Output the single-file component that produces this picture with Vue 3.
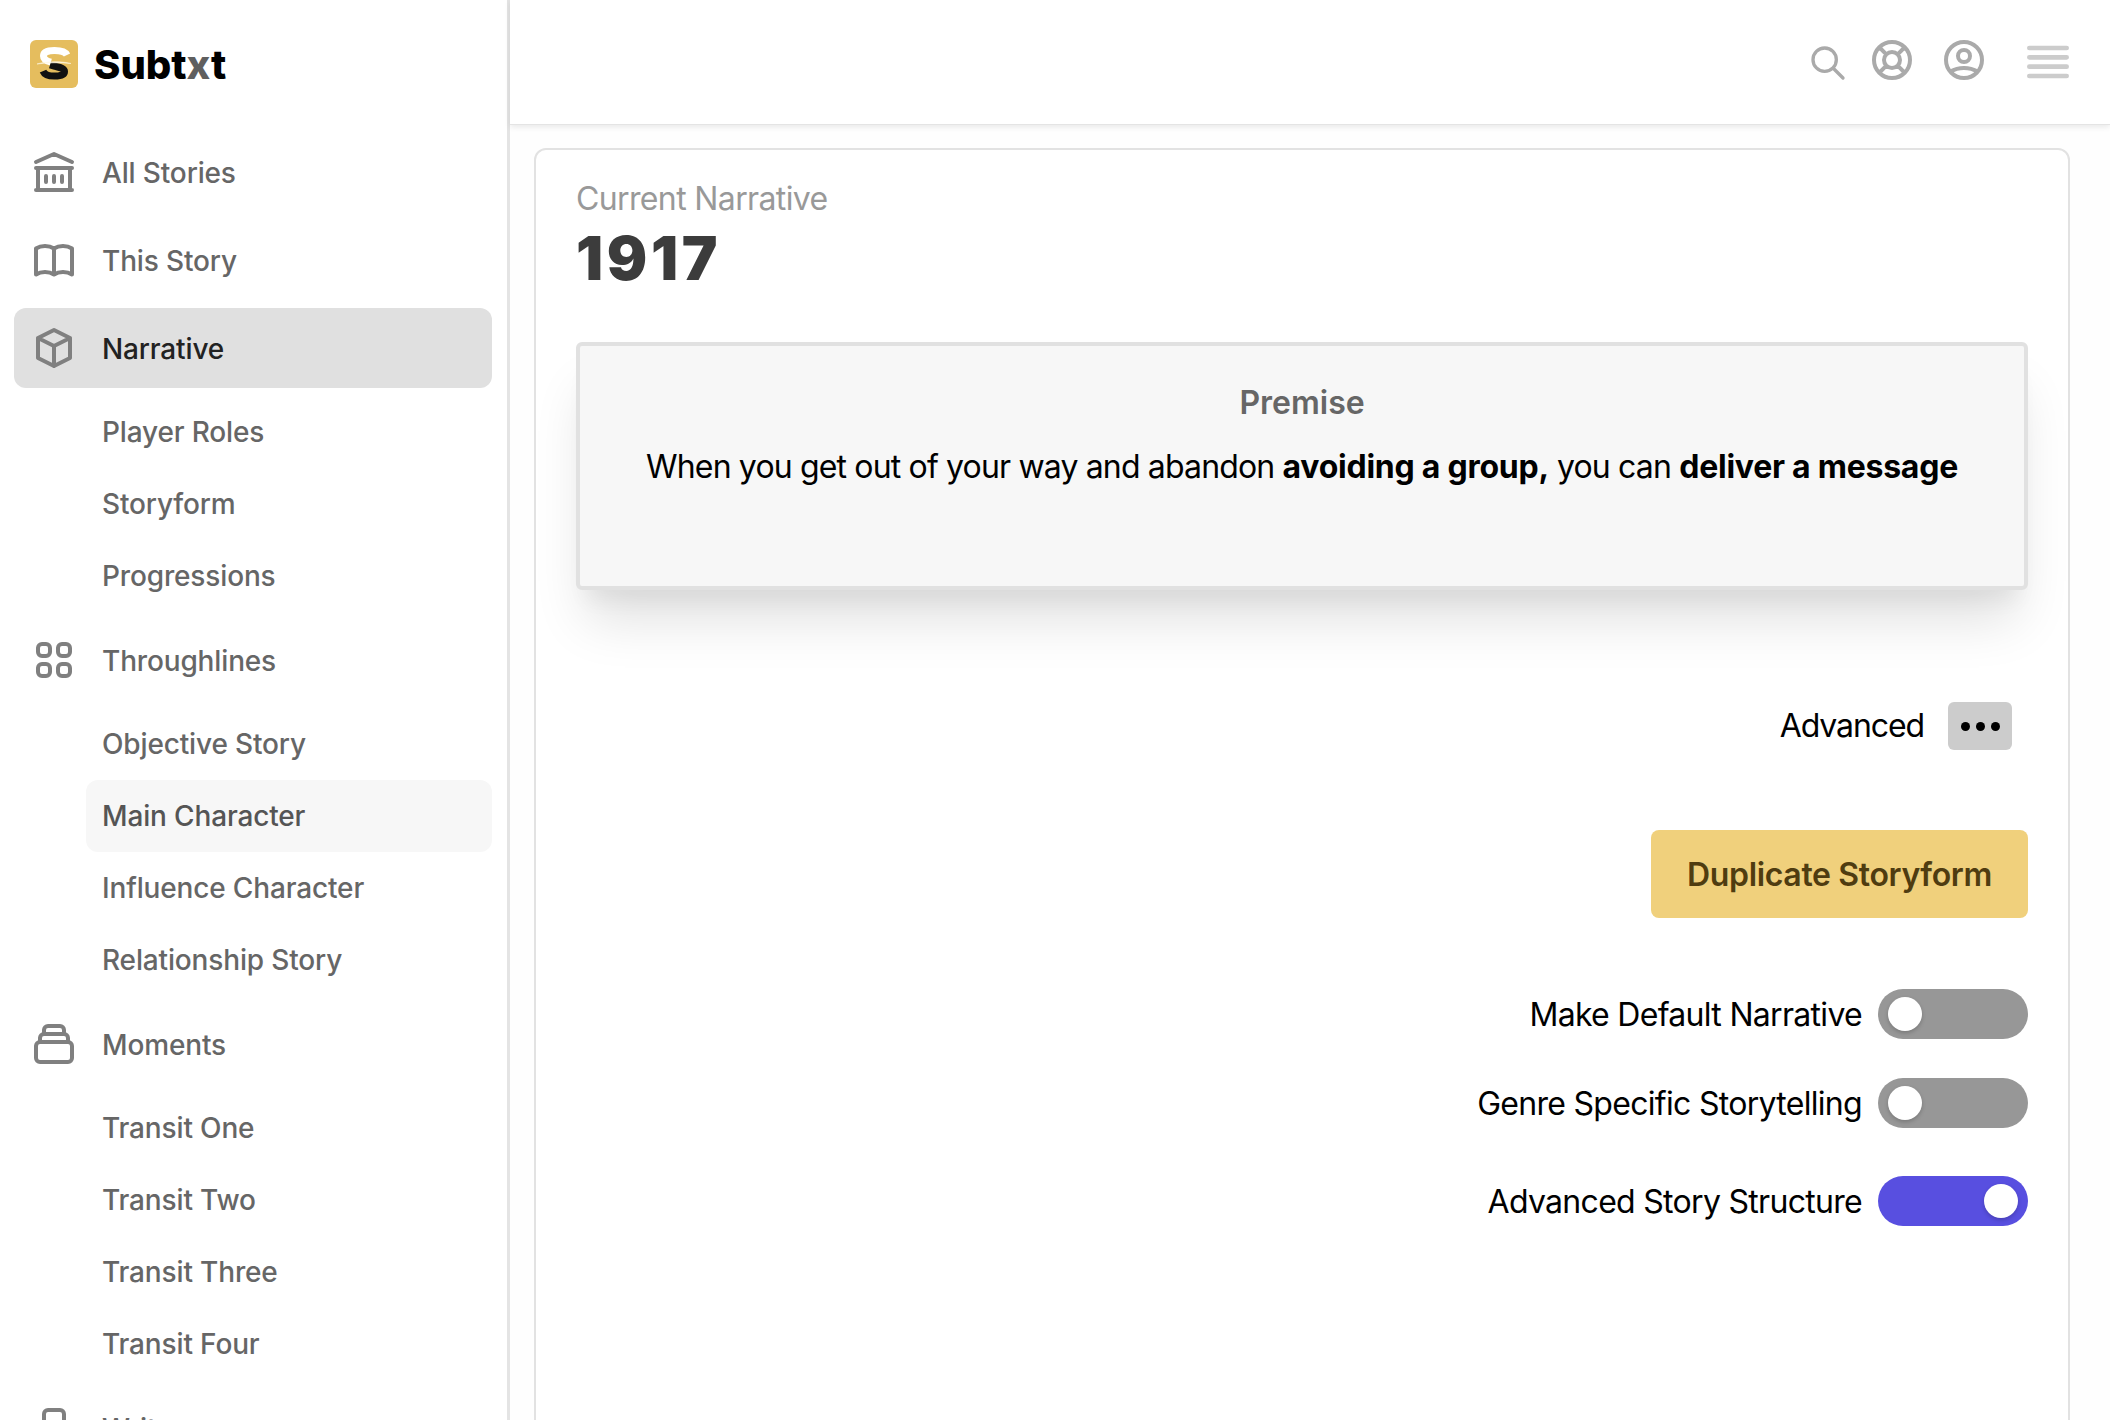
<script setup>
const icons = {
  library: 'M8 14v3m4-3v3m4-3v3M3 21h18M3 10h18M3 7l9-4 9 4M4 10h16v11H4V10z',
  book: 'M12 6.253v13m0-13C10.832 5.477 9.246 5 7.5 5S4.168 5.477 3 6.253v13C4.168 18.477 5.754 18 7.5 18s3.332.477 4.5 1.253m0-13C13.168 5.477 14.754 5 16.5 5c1.747 0 3.332.477 4.5 1.253v13C19.832 18.477 18.247 18 16.5 18c-1.746 0-3.332.477-4.5 1.253',
  cube: 'M20 7l-8-4-8 4m16 0l-8 4m8-4v10l-8 4m0-10L4 7m8 4v10M4 7v10l8 4',
  grid: 'M4 6a2 2 0 012-2h2a2 2 0 012 2v2a2 2 0 01-2 2H6a2 2 0 01-2-2V6zM14 6a2 2 0 012-2h2a2 2 0 012 2v2a2 2 0 01-2 2h-2a2 2 0 01-2-2V6zM4 16a2 2 0 012-2h2a2 2 0 012 2v2a2 2 0 01-2 2H6a2 2 0 01-2-2v-2zM14 16a2 2 0 012-2h2a2 2 0 012 2v2a2 2 0 01-2 2h-2a2 2 0 01-2-2v-2z',
  stack: 'M19 11H5m14 0a2 2 0 012 2v6a2 2 0 01-2 2H5a2 2 0 01-2-2v-6a2 2 0 012-2m14 0V9a2 2 0 00-2-2M5 11V9a2 2 0 012-2m0 0V5a2 2 0 012-2h6a2 2 0 012 2v2M7 7h10',
  doc: 'M9 21h6a2 2 0 002-2V5a2 2 0 00-2-2H9a2 2 0 00-2 2v14a2 2 0 002 2z',
}
const nav = [
  { label: 'All Stories', icon: 'library' },
  { label: 'This Story', icon: 'book' },
  { label: 'Narrative', icon: 'cube', active: true, subs: [{ label: 'Player Roles' }, { label: 'Storyform' }, { label: 'Progressions' }] },
  { label: 'Throughlines', icon: 'grid', subs: [{ label: 'Objective Story' }, { label: 'Main Character', current: true }, { label: 'Influence Character' }, { label: 'Relationship Story' }] },
  { label: 'Moments', icon: 'stack', subs: [{ label: 'Transit One' }, { label: 'Transit Two' }, { label: 'Transit Three' }, { label: 'Transit Four' }] },
  { label: 'Write', icon: 'doc' },
]
const toggles = [
  { label: 'Make Default Narrative', on: false, cls: 'first' },
  { label: 'Genre Specific Storytelling', on: false, cls: 'second' },
  { label: 'Advanced Story Structure', on: true, cls: 'third' },
]
</script>

<template>
  <div class="app">
    <aside class="sidebar">
      <div class="brand">
        <svg class="logo" viewBox="0 0 48 48" width="48" height="48">
          <rect width="48" height="48" rx="6" fill="#e5bd5e" />
          <path d="M37 15C35 11 30 10.500 24.500 10.500 17.500 10.500 13.500 12.500 13.500 16c0 3 2.500 5 7.500 6.200" fill="none" stroke="#fff" stroke-width="7" />
          <path d="M20 25c2 .6 4 1 6 1.500 5 1.200 8.500 2.200 8.500 5 0 3-4 4.600-10 4.600-6 0-10-1.400-11.500-5" fill="none" stroke="#111" stroke-width="7" />
          <path d="M7 24C17 21 31 21 41 23.500 31 22.500 17 22.500 7 24z" fill="#fff8e6" stroke="#fff8e6" stroke-width=".5" />
        </svg>
        <span class="brand-name">Subt<span class="brand-x">x</span>t</span>
      </div>
      <nav class="nav">
        <template v-for="item in nav" :key="item.label">
          <div class="nav-row" :class="{ active: item.active }">
            <svg class="nav-icon" viewBox="0 0 24 24" width="48" height="48">
              <path :d="icons[item.icon]" />
            </svg>
            <span class="nav-label">{{ item.label }}</span>
          </div>
          <div v-if="item.subs" class="subs">
            <div v-for="sub in item.subs" :key="sub.label" class="sub-row" :class="{ current: sub.current }">{{ sub.label }}</div>
          </div>
        </template>
      </nav>
    </aside>

    <div class="column">
      <header class="topbar">
        <svg class="top-icon search" viewBox="0 0 24 24" width="40" height="40"><path d="M21 21l-6-6m2-5a7 7 0 11-14 0 7 7 0 0114 0z" /></svg>
        <svg class="top-icon help" viewBox="0 0 24 24" width="48" height="48"><path d="M18.364 5.636l-3.536 3.536m0 5.656l3.536 3.536M9.172 9.172L5.636 5.636m3.536 9.192l-3.536 3.536M21 12a9 9 0 11-18 0 9 9 0 0118 0zm-5 0a4 4 0 11-8 0 4 4 0 018 0z" /></svg>
        <svg class="top-icon user" viewBox="0 0 24 24" width="48" height="48"><path d="M5.121 17.804A13.937 13.937 0 0112 16c2.500 0 4.847.655 6.879 1.804M15 10a3 3 0 11-6 0 3 3 0 016 0zm6 2a9 9 0 11-18 0 9 9 0 0118 0z" /></svg>
        <svg class="top-icon menu" viewBox="0 0 24 24" width="56" height="56"><path d="M4 6h16M4 10h16M4 14h16M4 18h16" /></svg>
      </header>

      <main class="main">
        <section class="card">
          <div class="eyebrow">Current Narrative</div>
          <h1 class="title">1917</h1>

          <div class="premise">
            <h2 class="premise-title">Premise</h2>
            <p class="premise-text">When you get out of your way and abandon <b>avoiding a group,</b> you can <b>deliver a message</b></p>
          </div>

          <div class="advanced">
            <span class="advanced-label">Advanced</span>
            <button class="dots" type="button" aria-label="Advanced">
              <i></i><i></i><i></i>
            </button>
          </div>

          <div class="actions">
            <button class="duplicate" type="button">Duplicate Storyform</button>
          </div>

          <div v-for="t in toggles" :key="t.label" class="toggle-row" :class="t.cls">
            <span>{{ t.label }}</span>
            <span class="toggle" :class="{ on: t.on }"><span class="knob"></span></span>
          </div>
        </section>
      </main>
    </div>
  </div>
</template>

<style scoped>
.app {
  display: flex;
  width: 2110px;
  height: 1420px;
  overflow: hidden;
  font-family: Inter, "Noto Sans", sans-serif;
  background: #fff;
  color: #000;
}
.sidebar {
  flex: none;
  width: 510px;
  height: 1420px;
  box-sizing: border-box;
  border-right: 3px solid #e4e4e4;
  overflow: hidden;
}
.brand {
  display: flex;
  align-items: center;
  gap: 16px;
  height: 48px;
  padding: 40px 0 0 30px;
}
.logo { flex: none; }
.brand-name {
  font-size: 40px;
  font-weight: 800;
  color: #000;
}
.brand-x { color: #5f5f5f; }
.nav {
  display: flex;
  flex-direction: column;
  padding: 44px 15px 0 14px;
}
.nav-row {
  display: flex;
  align-items: center;
  gap: 24px;
  flex: none;
  height: 80px;
  margin-bottom: 8px;
  padding-left: 16px;
  border-radius: 12px;
  font-size: 28px;
  font-weight: 500;
  letter-spacing: -0.15px;
  color: #666;
}
.nav-label { padding-top: 2px; }
.nav-row.active {
  background: #e0e0e0;
  color: #222;
}
.nav-icon {
  flex: none;
  fill: none;
  stroke: #808080;
  stroke-width: 2;
  stroke-linecap: round;
  stroke-linejoin: round;
}
.subs {
  display: flex;
  flex-direction: column;
  margin-bottom: 8px;
}
.sub-row {
  height: 72px;
  line-height: 73px;
  margin-left: 72px;
  padding-left: 16px;
  border-radius: 12px;
  font-size: 28px;
  font-weight: 500;
  letter-spacing: -0.15px;
  color: #666;
}
.sub-row.current {
  background: #f7f7f7;
  color: #555;
}
.column {
  flex: 1;
  min-width: 0;
  display: flex;
  flex-direction: column;
  height: 1420px;
}
.topbar {
  flex: none;
  position: relative;
  z-index: 1;
  display: flex;
  justify-content: flex-end;
  align-items: flex-start;
  box-sizing: border-box;
  height: 125px;
  padding-right: 34px;
  background: #fff;
  border-bottom: 1px solid #e4e4e4;
  box-shadow: 0 2px 6px rgba(0, 0, 0, 0.09);
}
.top-icon {
  flex: none;
  fill: none;
  stroke: #aaa;
  stroke-width: 2;
  stroke-linecap: round;
  stroke-linejoin: round;
}
.search { margin-top: 43px; margin-right: 20px; stroke-width: 2; }
.help { margin-top: 36px; margin-right: 24px; }
.user { margin-top: 36px; margin-right: 32px; }
.menu { margin-top: 34px; stroke: #ccc; }
.main {
  flex: 1;
  min-height: 0;
  overflow: hidden;
  padding: 23px 40px 0 24px;
  background: #fefefe;
}
.card {
  box-sizing: border-box;
  height: 1320px;
  padding: 24px 40px 0;
  background: #fff;
  border: 2px solid #e2e2e2;
  border-radius: 12px;
}
.eyebrow {
  padding-top: 1px;
  height: 47px;
  font-size: 32px;
  line-height: 48px;
  letter-spacing: -0.63px;
  color: #999;
}
.title {
  margin: 0;
  font-size: 60px;
  line-height: 72px;
  font-weight: 900;
  letter-spacing: 3.7px;
  color: #3c3c3c;
}
.premise {
  box-sizing: border-box;
  height: 248px;
  margin-top: 48px;
  padding-top: 37px;
  text-align: center;
  background: #f7f7f7;
  border: 4px solid #e1e1e1;
  border-radius: 6px;
  box-shadow: 0 40px 50px -10px rgba(0, 0, 0, 0.12), 0 20px 20px -10px rgba(0, 0, 0, 0.05);
}
.premise-title {
  margin: 0;
  font-size: 32px;
  line-height: 40px;
  font-weight: 600;
  color: #666;
}
.premise-text {
  margin: 20px 0 0;
  font-size: 32px;
  line-height: 48px;
  letter-spacing: -0.84px;
  white-space: nowrap;
}
.premise-text b {
  font-weight: 700;
  letter-spacing: -0.25px;
}
.advanced {
  display: flex;
  justify-content: flex-end;
  align-items: center;
  gap: 24px;
  margin-top: 112px;
  padding-right: 16px;
  font-size: 32px;
  line-height: 48px;
}
.advanced-label { letter-spacing: -1.1px; }
.dots {
  display: flex;
  align-items: center;
  justify-content: center;
  gap: 6px;
  width: 64px;
  height: 48px;
  padding: 0;
  border: 0;
  border-radius: 6px;
  background: #ccc;
}
.dots i {
  width: 9px;
  height: 9px;
  border-radius: 50%;
  background: #000;
}
.actions {
  display: flex;
  justify-content: flex-end;
  margin-top: 80px;
}
.duplicate {
  width: 377px;
  height: 88px;
  padding: 0;
  border: 0;
  border-radius: 8px;
  background: #f0d07c;
  color: #4f3c10;
  font-family: inherit;
  font-size: 32px;
  font-weight: 600;
  letter-spacing: -0.35px;
}
.toggle-row {
  display: flex;
  justify-content: flex-end;
  align-items: center;
  gap: 16px;
  font-size: 32px;
  letter-spacing: -0.7px;
}
.toggle-row.first { margin-top: 71px; }
.toggle-row.second { margin-top: 39px; }
.toggle-row.third { margin-top: 48px; }
.toggle {
  display: flex;
  align-items: center;
  box-sizing: border-box;
  width: 150px;
  height: 50px;
  padding: 0 10px;
  border-radius: 25px;
  background: #979797;
}
.toggle.on {
  justify-content: flex-end;
  background: #584fe0;
}
.knob {
  width: 34px;
  height: 34px;
  border-radius: 50%;
  background: #fff;
  box-shadow: 0 2px 4px rgba(0, 0, 0, 0.2);
}
</style>

<style>
html, body { margin: 0; background: #fff; overflow: hidden; }
</style>
